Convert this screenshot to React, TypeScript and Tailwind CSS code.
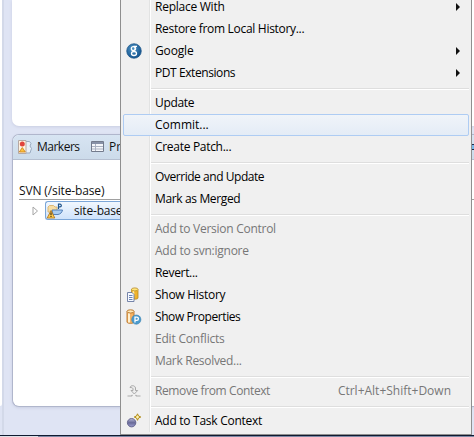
import React from "react";

type Item = {
  label: string;
  track: string;
  icon?: React.ReactNode;
  sub?: boolean;
  disabled?: boolean;
  active?: boolean;
  keys?: string;
};

const GoogleIcon = () => (
  <svg width="16" height="16" viewBox="0 0 16 16">
    <defs>
      <radialGradient id="gg" cx="0.4" cy="0.35" r="0.7">
        <stop offset="0" stopColor="#4f94c4" />
        <stop offset="1" stopColor="#0f4f8c" />
      </radialGradient>
    </defs>
    <circle cx="8" cy="8" r="7.3" fill="url(#gg)" stroke="#1c5688" strokeWidth="0.7" />
    <ellipse cx="7.2" cy="5.6" rx="1.9" ry="2" fill="none" stroke="#fff" strokeWidth="1.2" />
    <path d="M7.500 3.400h3.500M9 4c1.500 1.500.5 2.800-.6 3.600" fill="none" stroke="#fff" strokeWidth="1.100" />
    <ellipse cx="8" cy="10.500" rx="2.500" ry="2" fill="none" stroke="#fff" strokeWidth="1.300" />
  </svg>
);

const HistoryIcon = () => (
  <svg width="16" height="16" viewBox="0 0 16 16">
    <path d="M5.500 2.500v8.500c0 1.600 6.500 1.600 6.500 0V2.500z" fill="#f0b32c" stroke="#b98a22" strokeWidth="0.800" />
    <path d="M7.500 3.500v6" stroke="#fff0ae" strokeWidth="1.500" />
    <ellipse cx="8.750" cy="2.400" rx="3.250" ry="1.500" fill="#ffe57a" stroke="#b98a22" strokeWidth="0.800" />
    <path d="M1.500 5.500h4.500l2 2v7h-6.500z" fill="#f6f9ff" stroke="#6878a0" strokeWidth="0.900" />
    <path d="M3 8.500h3.500M3 10.500h3.500M3 12.500h3.500" stroke="#5b76ae" strokeWidth="0.900" />
  </svg>
);

const PropertiesIcon = () => (
  <svg width="16" height="16" viewBox="0 0 16 16">
    <path d="M1 2.500v10.500c0 1.800 7 1.800 7 0V2.500z" fill="#f5b263" stroke="#b46f24" strokeWidth="0.900" />
    <path d="M3 3.500v10" stroke="#fff0cf" strokeWidth="2" />
    <ellipse cx="4.500" cy="2.400" rx="3.500" ry="1.600" fill="#ffe9b8" stroke="#b46f24" strokeWidth="0.900" />
    <circle cx="10.300" cy="10.600" r="4.600" fill="#4b9bce" stroke="#357fae" strokeWidth="0.600" />
    <path d="M9 13.500V8.200h1.800a1.500 1.500 0 0 1 0 3.200H9" fill="none" stroke="#fff" strokeWidth="1.300" />
  </svg>
);

const RemoveIcon = () => (
  <svg width="16" height="16" viewBox="0 0 16 16" fill="none" stroke="#a9a9a9">
    <path d="M4 4.500C4.500 2 9 2 9.500 5V7.500h2.200L8.300 11 5 7.500h2V5.700C6.500 4.700 5.500 4.500 4 4.500z" fill="#ededed" />
    <path d="M1.500 13h4l1-1M9.500 12l1 1h4" strokeWidth="1.200" />
  </svg>
);

const TaskIcon = () => (
  <svg width="16" height="16" viewBox="0 0 16 16">
    <defs>
      <linearGradient id="tg" x1="0" y1="0" x2="0" y2="1">
        <stop offset="0" stopColor="#b9bbd9" />
        <stop offset="0.5" stopColor="#696a98" />
        <stop offset="1" stopColor="#9d9fd0" />
      </linearGradient>
    </defs>
    <circle cx="5.600" cy="9.700" r="4.200" fill="url(#tg)" stroke="#5f5f88" strokeWidth="0.900" />
    <path d="M11.500 .8l1 2.200L14.800 4l-2.300 1-1 2.300-1-2.300L8.200 4l2.300-1z" fill="#fff3ae" stroke="#b08a17" />
  </svg>
);

const groups: Item[][] = [
  [
    { label: "Replace With", track: "tracking-[-0.25px]", sub: true },
    { label: "Restore from Local History...", track: "tracking-[-0.3px]" },
    { label: "Google", track: "tracking-[-0.15px]", sub: true, icon: <GoogleIcon /> },
    { label: "PDT Extensions", track: "tracking-[-0.42px]", sub: true },
  ],
  [
    { label: "Update", track: "tracking-[-0.35px]" },
    { label: "Commit...", track: "tracking-normal", active: true },
    { label: "Create Patch...", track: "tracking-[-0.3px]" },
  ],
  [
    { label: "Override and Update", track: "tracking-[-0.45px]" },
    { label: "Mark as Merged", track: "tracking-[-0.36px]" },
  ],
  [
    { label: "Add to Version Control", track: "tracking-[-0.27px]", disabled: true },
    { label: "Add to svn:ignore", track: "tracking-[-0.25px]", disabled: true },
    { label: "Revert...", track: "tracking-[-0.33px]" },
    { label: "Show History", track: "tracking-[-0.27px]", icon: <HistoryIcon /> },
    { label: "Show Properties", track: "tracking-[-0.42px]", icon: <PropertiesIcon /> },
    { label: "Edit Conflicts", track: "tracking-[-0.2px]", disabled: true },
    { label: "Mark Resolved...", track: "tracking-[-0.3px]", disabled: true },
  ],
  [
    {
      label: "Remove from Context",
      track: "tracking-[-0.39px]",
      disabled: true,
      icon: <RemoveIcon />,
      keys: "Ctrl+Alt+Shift+Down",
    },
  ],
  [{ label: "Add to Task Context", track: "tracking-[-0.27px]", icon: <TaskIcon /> }],
];

function MenuRow({ item }: { item: Item }) {
  return (
    <div
      className={`flex h-[22px] items-center rounded-[2px] border pl-[2px] ${
        item.active ? "border-[#aeccf3] bg-linear-to-b from-[#f0f4f9] to-[#e4ecf6]" : "border-transparent"
      } ${item.disabled ? "text-[#777777]" : "text-black"}`}
    >
      <span className="flex w-[29px] shrink-0">{item.icon}</span>
      <span className={`grow ${item.track}`}>{item.label}</span>
      {item.keys && <span className="mr-[17px]">{item.keys}</span>}
      {item.sub && (
        <svg width="4" height="8" viewBox="0 0 4 8" className="mr-[8px]">
          <path d="M0 0L4 4L0 8z" fill="#111" />
        </svg>
      )}
    </div>
  );
}

function ContextMenu() {
  return (
    <div className="absolute top-[-7px] left-[120px] h-[442px] w-[352px] border border-[#8f8f8f] bg-[#f0f0f0] p-[2px]">
      <div className="absolute inset-y-[2px] left-[28px] w-[2px] border-r border-l border-r-white border-l-[#e2e3e3]" />
      <div className="relative">
        {groups.map((group, i) => (
          <div key={i}>
            {i > 0 && (
              <div className="mt-[4px] mb-[2px] ml-[28px] h-[2px] border-t border-b border-t-[#dedede] border-b-white" />
            )}
            {group.map((item) => (
              <MenuRow key={item.label} item={item} />
            ))}
          </div>
        ))}
      </div>
    </div>
  );
}

export default function App() {
  return (
    <div className="relative h-[437px] w-[474px] overflow-hidden bg-[#dfe4f4] font-['Open_Sans','Noto_Sans',sans-serif] text-[12px] leading-[16px] whitespace-nowrap text-[#111]">
      <div className="flex h-[435px]">
        <div className="h-[406px] w-[2px] shrink-0 rounded-br-[2px] bg-white" />
        <div className="w-[10px] shrink-0 border-l-2 border-[#d3d9e9]" />
        <div className="flex grow flex-col">
          <div className="h-[126px] rounded-bl-[7px] bg-white shadow-[0_1px_3px_#c9cee2]" />
          <div className="mt-[8px] flex h-[273px] flex-col overflow-hidden rounded-l-[7px] border border-r-0 border-[#b0b6cc] bg-white shadow-[0_1px_3px_#c9cee2]">
            <div className="flex h-[25px] shrink-0 items-center border-b border-[#b5bfd0] bg-linear-to-b from-[#d7e4f2] to-[#ccdbea] pl-[4px]">
              <svg width="16" height="16" viewBox="0 0 16 16">
                <path d="M8.500 2.500h4l1.500 2-1 2.500 1.500 2.500-1.500 4.500h-4.500z" fill="#eaf0f7" stroke="#9aabc0" />
                <path d="M1.500 1.500h7.500v13h-7.500z" fill="#fff3e0" stroke="#b5a9a4" />
                <circle cx="5.300" cy="5" r="2.500" fill="#e0443c" />
                <path d="M5.300 8.500L8.300 13H2.300z" fill="#ffc33c" stroke="#c77c1b" strokeWidth="0.800" />
              </svg>
              <span className="ml-[4px] w-[42px] tracking-[-0.5px]">Markers</span>
              <svg width="14" height="12" viewBox="0 0 14 12" className="mr-[4px] ml-[12px] shrink-0">
                <path d="M.5.5h12v10H.5z" fill="#f4f6fa" stroke="#737b8c" />
                <path d="M1 1h11v2H1z" fill="#8791a7" />
                <path d="M1 5.500h11M1 8h11M4.500 3v7" stroke="#aab2c2" />
              </svg>
              <span className="w-[11px] overflow-hidden">Properties</span>
              <div className="ml-auto h-[6px] w-[2px] border-y border-[#202b4b] bg-[#79b9ea]" />
            </div>
            <div className="ml-[6px] flex h-[40px] items-end border-b border-b-[#a0a0a0]">
              <span className="tracking-[-0.13px]">SVN (/site-base)</span>
            </div>
            <div className="mt-px flex h-[19px] items-center pl-[19px]">
              <svg width="7" height="10" viewBox="0 0 7 10">
                <path d="M1 1l4.500 4L1 9z" fill="#fff" stroke="#a5a5a5" />
              </svg>
              <div className="ml-[6px] flex h-[19px] w-[82px] items-center rounded-l-[3px] border border-r-0 border-[#7ba6d8] bg-linear-to-b from-[#f1f7fe] to-[#cfe3fb]">
                <svg width="18" height="16" viewBox="0 0 18 16" className="shrink-0">
                  <path d="M2 9V4l1.500-1.500h4L9 4h2v5z" fill="#f7dda4" stroke="#d9b26c" strokeWidth="0.900" />
                  <path d="M6 7h10.500c-.5 2.500-2 4-4.500 4.500H7z" fill="#a9cdf3" stroke="#4877b2" strokeWidth="0.900" />
                  <path d="M12.500 6V1.200h1.500a1.300 1.300 0 0 1 0 2.700h-1.500" fill="none" stroke="#1f548c" strokeWidth="1.200" />
                  <path d="M5 7.500l3.800 7.500H1.200z" fill="#ffcd4e" stroke="#b67a22" strokeWidth="0.900" />
                  <path d="M5 9.500v2.700M5 13v1" stroke="#443117" strokeWidth="1.200" />
                </svg>
                <span className="ml-[10px] tracking-[-0.2px]">site-base</span>
              </div>
            </div>
          </div>
        </div>
      </div>
      <div className="flex h-[2px] border-t border-[#101a30]">
        <div className="w-[38px] bg-[#dde1e8]" />
        <div className="grow bg-[#7d89a5]" />
      </div>
      <ContextMenu />
    </div>
  );
}
